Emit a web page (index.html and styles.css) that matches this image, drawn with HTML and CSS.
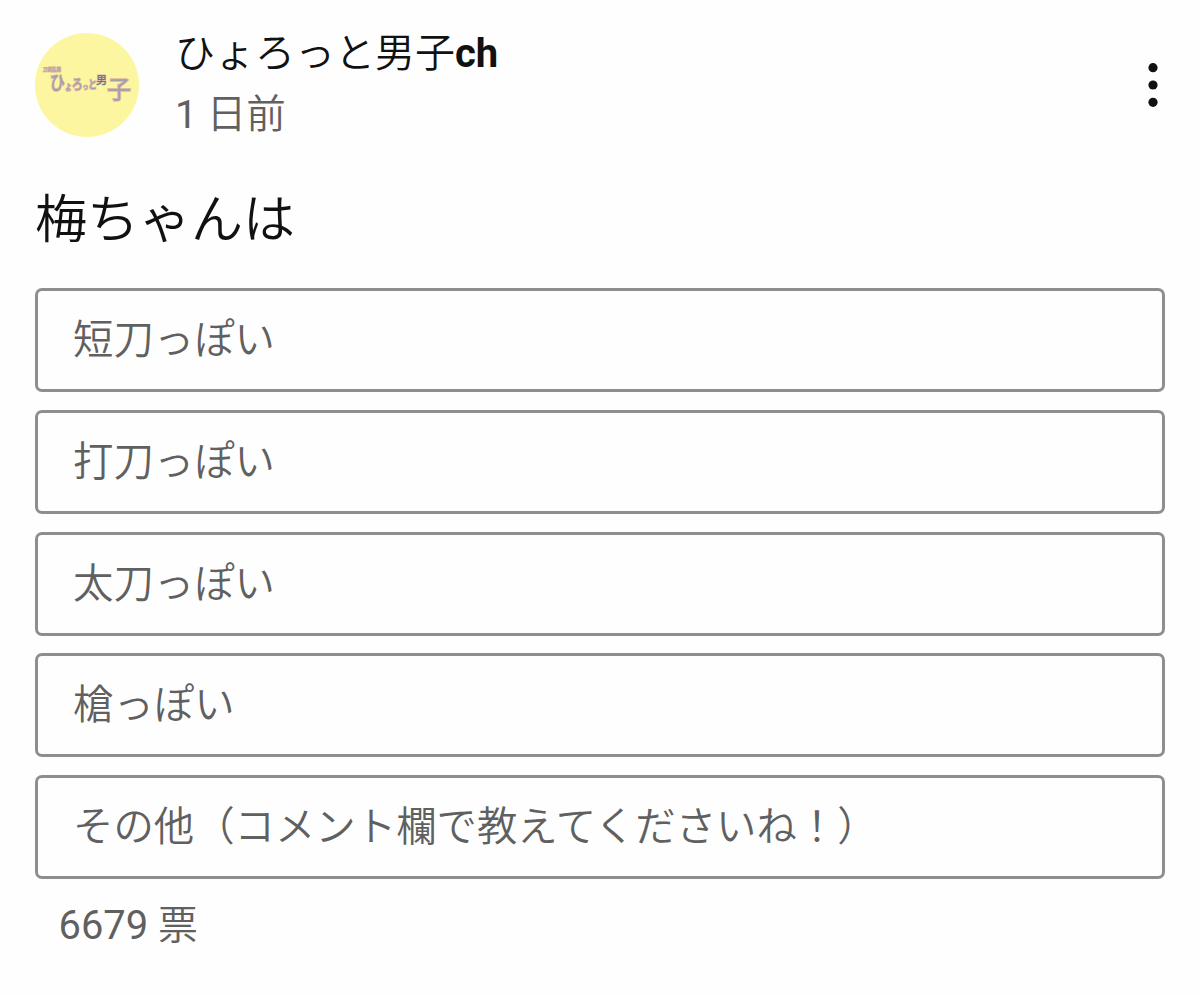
FILE: index.html
```html
<!DOCTYPE html>
<html lang="ja">
<head>
<meta charset="utf-8">
<title>ひょろっと男子ch</title>
<link rel="stylesheet" href="styles.css">
</head>
<body>
<article class="post">
  <header class="header">
    <svg class="avatar" viewBox="0 0 104 104" aria-hidden="true">
      <circle cx="52" cy="52" r="52" fill="#fcf6a0"/>
      <g class="logo">
        <text class="tiny" x="8" y="38">刀剣乱舞</text>
        <text transform="translate(15 57) scale(.78 1)"><tspan font-size="19">ひ</tspan><tspan font-size="9">ょ</tspan><tspan font-size="14" dy="-1">ろ</tspan><tspan font-size="7">っ</tspan><tspan font-size="11">と</tspan></text>
        <text class="man" x="61" y="51" font-size="11">男</text>
        <text class="child" x="72" y="65" font-size="24">子</text>
      </g>
    </svg>
    <div class="meta">
      <div class="name">ひょろっと男子<b class="latin">ch</b></div>
      <div class="time"><span class="num">1</span> 日前</div>
    </div>
    <svg class="menu" viewBox="0 0 12 46" role="img" aria-label="メニュー">
      <circle cx="6" cy="5.7" r="4.6"/><circle cx="6" cy="23" r="4.6"/><circle cx="6" cy="40.3" r="4.6"/>
    </svg>
  </header>
  <h1 class="title">梅ちゃんは</h1>
  <ul class="options">
    <li class="option">短刀っぽい</li>
    <li class="option">打刀っぽい</li>
    <li class="option">太刀っぽい</li>
    <li class="option">槍っぽい</li>
    <li class="option">その他（コメント欄で教えてくださいね！）</li>
  </ul>
  <div class="votes"><span class="num">6679</span> 票</div>
</article>
</body>
</html>
```
FILE: styles.css
```css
* { box-sizing: border-box; }
body { margin: 0; background: #fefefe; color: #111; font-family: Roboto, "Noto Sans CJK JP", sans-serif; font-weight: 350; }
.post { padding: 33px 35px 0; }
.header { display: flex; height: 104px; }
.avatar { width: 104px; height: 104px; flex: none; }
.logo { font-family: "Noto Sans CJK JP", sans-serif; font-weight: 500; fill: #a39fae; stroke: #e0bda4; stroke-width: 1.8px; paint-order: stroke; }
.logo .tiny { font-size: 4.5px; stroke-width: 1px; }
.logo .man { fill: #61798c; stroke-width: 1px; }
.logo .child { font-weight: 400; }
.meta { flex: 1; margin-left: 36px; white-space: nowrap; }
.name { font-size: 40px; line-height: 60px; margin-top: -9px; }
.latin { font-weight: 700; }
.time { font-size: 39.5px; line-height: 60px; margin-top: 1px; color: #606060; }
.num { font-weight: 400; }
.menu { width: 12px; height: 46px; margin: 29px 6px 0 0; fill: #111; }
.title { margin: 46px 0 0; font-size: 52px; line-height: 76px; font-weight: 350; }
.options { list-style: none; margin: 29px 0 0; padding: 0; display: grid; gap: 17.75px; }
.option { height: 104px; border: 3px solid #8e8e8e; border-radius: 7px; padding: 1px 35px 0; font-size: 40.4px; line-height: 98px; color: #606060; white-space: nowrap; }
.votes { margin: 17px 0 0 23.5px; font-size: 39.9px; line-height: 60px; color: #606060; }
```
